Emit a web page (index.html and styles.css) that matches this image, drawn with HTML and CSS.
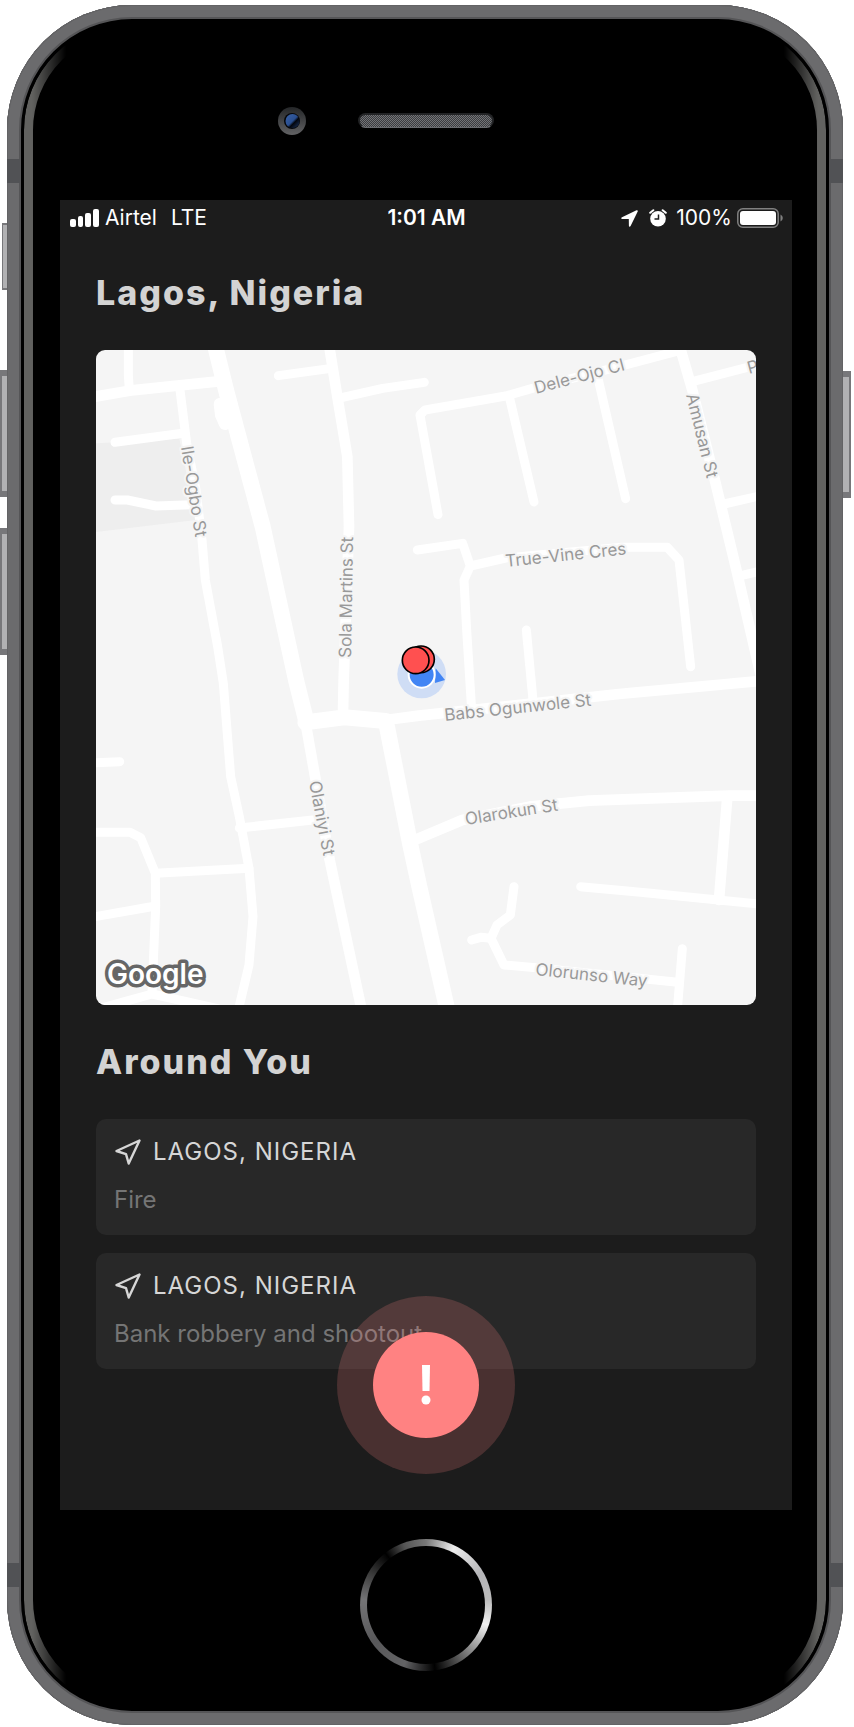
FILE: index.html
```html
<!DOCTYPE html>
<html lang="en">
<head>
<meta charset="utf-8">
<meta name="viewport" content="width=device-width, initial-scale=1">
<title>Around You</title>
<link rel="stylesheet" href="styles.css">
</head>
<body>
<div class="phone">
  <span class="side-key mute"></span>
  <span class="side-key volume-up"></span>
  <span class="side-key volume-down"></span>
  <span class="side-key power"></span>
  <span class="antenna antenna-top"></span>
  <span class="antenna antenna-bottom"></span>

  <div class="bezel-top">
    <svg class="camera" viewBox="0 0 28 28" aria-hidden="true">
      <defs>
        <linearGradient id="cam-ring" x1="0" y1="0" x2="0" y2="1"><stop offset="0" stop-color="#242628"/><stop offset="1" stop-color="#626264"/></linearGradient>
        <linearGradient id="cam-lens" x1="0" y1="0" x2="1" y2="1"><stop offset="0" stop-color="#3a62a8"/><stop offset=".5" stop-color="#2a4f90"/><stop offset=".62" stop-color="#03060d"/><stop offset="1" stop-color="#1d3768"/></linearGradient>
      </defs>
      <circle cx="14" cy="14" r="14" fill="url(#cam-ring)"/>
      <circle cx="14" cy="14" r="8" fill="#05070b"/>
      <circle cx="14.500" cy="14" r="7" fill="url(#cam-lens)"/>
    </svg>
    <div class="speaker"></div>
  </div>

  <main class="screen">
    <div class="status">
      <div class="status-left">
        <svg class="signal" viewBox="0 0 29 18" fill="#fff" aria-hidden="true">
          <rect x="0" y="10" width="6" height="8" rx="2"/><rect x="8" y="7" width="5" height="11" rx="2"/><rect x="15" y="4" width="6" height="14" rx="2"/><rect x="23" y="0" width="6" height="18" rx="2"/>
        </svg>
        <span>Airtel</span>
        <span class="network">LTE</span>
      </div>
      <div class="status-time">1:01 AM</div>
      <div class="status-right">
        <svg class="locate" viewBox="0 0 17 17" fill="#fff" aria-hidden="true"><path d="M15.500.3 1 7.200C-.2 7.800 0 8.900 1.200 8.900L7.800 9l.1 6.700c0 1.400 1.100 1.500 1.700.3L16.700 1.400C17.100.5 16.400-.1 15.500.3Z"/></svg>
        <svg class="alarm" viewBox="0 0 18 18" aria-hidden="true">
          <circle cx="9" cy="9.700" r="7.800" fill="#fff"/>
          <path d="M1.200 3.800 4.300 1.200M16.800 3.800 13.700 1.200" stroke="#fff" stroke-width="2" stroke-linecap="round"/>
          <path d="M9.500 5.500V10H5.500" fill="none" stroke="#1c1c1c" stroke-width="1.500"/>
        </svg>
        <span class="percent">100%</span>
        <svg class="battery" viewBox="0 0 46 20" aria-hidden="true">
          <rect x=".8" y=".8" width="40.400" height="18.400" rx="5" fill="none" stroke="#808080" stroke-width="1.500"/>
          <rect x="3" y="3" width="36" height="14" rx="3" fill="#fff"/>
          <path d="M43.500 6.500q2.300 1 2.300 3.500t-2.300 3.500z" fill="#808080"/>
        </svg>
      </div>
    </div>

    <div class="content">
      <h1 class="heading">Lagos, Nigeria</h1>

      <svg class="map" viewBox="0 0 660 655" role="img" aria-label="Map of Lagos">
        <g transform="scale(.33333)">
          <path d="M0 280 250 266 300 510 0 546Z" fill="#eee"/>
          <g class="road">
            <path class="w48" d="M358-10 390 120 500 530 600 990 630 1110"/>
            <path class="w36" d="M371 162 375 195 387 222"/>
            <path class="w32" d="M629 1120 659 1290 701 1530 796 1975"/>
            <path class="w48" d="M628 1117 744 1102 869 1113"/>
            <path class="w48" d="M870 1115 942 1480 970 1610 1054 1980"/>
            <path class="w32" d="M869 1110 969 1097 1569 1032 1990 993"/>
            <path class="w32" d="M699-15 724 140 754 320 759 530 743 990 741 1090"/>
            <path d="M547 77 700 56"/>
            <path d="M740 142 860 115 985 97"/>
            <path class="w32" d="M-15 142 100 122 360 95"/>
            <path d="M97-15V75L100 120"/>
            <path d="M252 120 272 280 300 420 318 570 328 690 365 890 382 1000 404 1280 430 1400 459 1555 471 1700 459 1845 427 1980"/>
            <path d="M57 277 260 250"/>
            <path d="M57 450H94L180 468 285 464"/>
            <path d="M-15 1239 71 1235"/>
            <path d="M-15 1447H102L134 1463 178 1570 179 1670 168 1930"/>
            <path d="M178 1570 459 1555"/>
            <path d="M430 1434 650 1410"/>
            <path d="M-15 1702 179 1668"/>
            <path d="M10 1976 168 1932 365 1976"/>
            <path class="w32" d="M945 1475 1099 1410 1300 1370 1479 1352 1899 1337H1990"/>
            <path class="w32" d="M1894 1340 1869 1650"/>
            <path d="M1454 1610 1649 1628 1990 1662"/>
            <path d="M1254 1610 1243 1695 1203 1725 1185 1765 1224 1845 1320 1853 1650 1887 1745 1897"/>
            <path d="M1127 1770 1154 1762 1185 1765"/>
            <path d="M1759 1796 1744 1980"/>
            <path d="M1026 494 972 195 987 180 1229 138 1309 115 1569 50 1750 2"/>
            <path d="M1241 145 1314 456"/>
            <path d="M1506 85 1589 446"/>
            <path class="w32" d="M1750-15 1789 120 1854 380 1919 650 1995 980"/>
            <path d="M1789 95 1990 43"/>
            <path d="M1884 462 1990 438"/>
            <path d="M1944 675 1990 664"/>
            <path d="M964 600 1100 580 1123 648 1104 690 1112 840 1127 1080"/>
            <path d="M1123 648 1229 624 1579 592H1714L1749 630 1784 950"/>
            <path d="M1291 840 1311 1050"/>
          </g>
        </g>
        <g class="street">
          <text transform="translate(440 44) rotate(-15)">Dele-Ojo Cl</text>
          <text transform="translate(410 217) rotate(-6)">True-Vine Cres</text>
          <text transform="translate(590 45) rotate(76)">Amusan St</text>
          <text transform="translate(653 24) rotate(-15)">P</text>
          <text transform="translate(85 97) rotate(81)">Ile-Ogbo St</text>
          <text transform="translate(255 308) rotate(-89)">Sola Martins St</text>
          <text transform="translate(349 371) rotate(-6)">Babs Ogunwole St</text>
          <text transform="translate(370 475) rotate(-9)">Olarokun St</text>
          <text transform="translate(439 625) rotate(6)">Olorunso Way</text>
          <text transform="translate(213 432) rotate(79)">Olaniyi St</text>
        </g>
        <text class="map-brand" x="11" y="634">Google</text>
        <g transform="scale(.33333)">
          <circle cx="977" cy="972" r="73" fill="#cfddf5"/>
          <path d="M1019 955 1047 990 1017 999Z" fill="#4285f4"/>
          <circle cx="977" cy="974" r="39" fill="#4285f4" stroke="#fff" stroke-width="6"/>
          <circle cx="975" cy="928" r="40" fill="#ff5050" stroke="#000" stroke-width="5"/>
          <circle cx="959" cy="931" r="40" fill="#ff5050" stroke="#000" stroke-width="5"/>
        </g>
      </svg>

      <h2 class="heading">Around You</h2>
      <div class="reports">
        <article class="report">
          <h3 class="report-place">
            <svg class="nav-icon" viewBox="0 0 26 26" aria-hidden="true"><path d="M24.500 1.500 1.500 12 11 15.200 13.700 24.500Z"/></svg>
            LAGOS, NIGERIA
          </h3>
          <p class="report-text">Fire</p>
        </article>
        <article class="report">
          <h3 class="report-place">
            <svg class="nav-icon" viewBox="0 0 26 26" aria-hidden="true"><path d="M24.500 1.500 1.500 12 11 15.200 13.700 24.500Z"/></svg>
            LAGOS, NIGERIA
          </h3>
          <p class="report-text">Bank robbery and shootout</p>
        </article>
      </div>
    </div>

    <button class="alert" type="button" aria-label="Report an incident">
      <span class="alert-core">
        <svg class="alert-mark" viewBox="0 0 10 40" fill="#fff" aria-hidden="true"><path d="M1 0H9L8.500 26H1.500Z"/><circle cx="5" cy="35" r="4.500"/></svg>
      </span>
    </button>
  </main>

  <div class="bezel-bottom">
    <button class="home" type="button" aria-label="Home"></button>
  </div>
</div>
</body>
</html>
```

FILE: styles.css
```css
* {
  box-sizing: border-box;
}

body {
  margin: 0;
  padding: 5px 11px 4px 7px;
  background: #fff;
  color: #fff;
  font-family: Inter, "Liberation Sans", sans-serif;
}

h1, h2, h3, p {
  margin: 0;
}

/* Device frame */
.phone {
  position: relative;
  padding: 14px 51px 14px 53px;
  border-radius: 125px;
  background: #000;
  box-shadow: inset 0 0 0 1px #636365, inset 0 0 0 12px #6b6b6d, inset 0 0 0 14px #555557;
}

/* Bright rim on both long edges that fades out round the corners */
.phone::before {
  content: "";
  position: absolute;
  inset: 17px;
  border: 9px solid #626260;
  border-radius: 108px;
  mask-image: linear-gradient(90deg, #000 8px, transparent 42px, transparent calc(100% - 42px), #000 calc(100% - 8px));
}

.side-key {
  position: absolute;
  left: -7px;
  width: 7px;
  height: 127px;
  border: solid #77777a;
  border-width: 6px 0 6px 2px;
  background: #b1b1b3;
}

.mute {
  left: -5px;
  top: 218px;
  width: 5px;
  height: 67px;
  border-width: 2px 0 2px 1px;
}

.volume-up {
  top: 365px;
}

.volume-down {
  top: 523px;
}

.power {
  top: 366px;
  left: auto;
  right: -8px;
  width: 8px;
  border-width: 6px 2px 6px 0;
}

.antenna {
  position: absolute;
  left: 0;
  right: 0;
  height: 24px;
  border: solid #515255;
  border-width: 0 13px;
}

.antenna-top {
  top: 154px;
}

.antenna-bottom {
  bottom: 138px;
}

.bezel-top {
  display: grid;
  grid-template-columns: 1fr auto 1fr;
  align-items: center;
  height: 181px;
  padding: 44px 0 22px;
}

.camera {
  justify-self: end;
  width: 28px;
  height: 28px;
  margin-right: 52px;
}

.speaker {
  width: 136px;
  height: 15px;
  border: 2px solid #222325;
  border-bottom: 1px solid #6b6d70;
  border-radius: 8px;
  background: repeating-conic-gradient(#737477 0 25%, #3b3c3f 0 50%) 0 0 / 2px 2px;
}

/* Screen */
.screen {
  position: relative;
  background: #1c1c1c;
}

.status {
  display: grid;
  grid-template-columns: 1fr auto 1fr;
  align-items: center;
  height: 36px;
  padding: 0 9px 0 10px;
  font-size: 21px;
  line-height: 24px;
}

.status-left,
.status-right {
  display: flex;
  align-items: center;
}

.status-left {
  gap: 6px;
}

.network {
  margin-left: 8px;
}

.status-time {
  font-weight: 600;
}

.status-right {
  justify-content: flex-end;
}

.signal {
  width: 29px;
  height: 18px;
}

.locate {
  width: 17px;
  height: 17px;
}

.alarm {
  width: 18px;
  height: 18px;
  margin: 0 9px 0 11px;
}

.battery {
  width: 46px;
  height: 20px;
  margin-left: 5px;
}

.content {
  padding: 35px 36px 141px;
}

.heading {
  color: #d3d3d3;
  font-size: 34px;
  line-height: 44px;
  font-weight: 800;
  letter-spacing: 2px;
}

.map {
  display: block;
  width: 100%;
  height: auto;
  margin: 35px 0;
  border-radius: 9px;
  background: #f5f5f5;
  overflow: hidden;
}

.road {
  fill: none;
  stroke: #fff;
  stroke-width: 27;
  stroke-linecap: round;
  stroke-linejoin: round;
}

.w32 {
  stroke-width: 32;
}

.w36 {
  stroke-width: 36;
}

.w48 {
  stroke-width: 48;
}

.street {
  fill: #999;
  stroke: #f5f5f5;
  stroke-width: 4px;
  stroke-linejoin: round;
  paint-order: stroke;
  font-size: 17px;
}

.map-brand {
  fill: #fff;
  stroke: #666;
  stroke-width: 7px;
  stroke-linejoin: round;
  paint-order: stroke;
  font-size: 28px;
  font-weight: 600;
}

.reports {
  display: grid;
  gap: 18px;
  margin-top: 35px;
}

.report {
  display: grid;
  gap: 18px;
  padding: 18px 18px 20px;
  border-radius: 10px;
  background: #282828;
}

.report-place {
  display: flex;
  align-items: center;
  gap: 12px;
  padding-left: 1px;
  color: #d6d6d6;
  font-size: 24px;
  line-height: 30px;
  font-weight: 400;
  letter-spacing: 1px;
}

.nav-icon {
  width: 26px;
  height: 26px;
  fill: none;
  stroke: #d6d6d6;
  stroke-width: 2.4;
  stroke-linejoin: round;
}

.report-text {
  color: #757575;
  font-size: 24px;
  line-height: 30px;
}

/* Floating action over the list */
.alert {
  position: absolute;
  left: 50%;
  bottom: 36px;
  display: grid;
  place-items: center;
  width: 178px;
  height: 178px;
  padding: 0;
  border: 0;
  border-radius: 50%;
  background: rgba(255, 130, 130, 0.2);
  transform: translateX(-50%);
}

.alert-core {
  display: grid;
  place-items: center;
  width: 106px;
  height: 106px;
  border-radius: 50%;
  background: #ff8282;
}

.alert-mark {
  width: 10px;
  height: 40px;
}

.bezel-bottom {
  display: grid;
  justify-items: center;
  height: 201px;
  padding-top: 29px;
}

.home {
  width: 132px;
  height: 132px;
  padding: 0;
  border: 7px solid transparent;
  border-radius: 50%;
  background:
    linear-gradient(#000, #000) padding-box,
    conic-gradient(#777 0deg, #eee 26deg, #b5b5b8 60deg, #bbb 85deg, #f2f2f2 108deg, #666 145deg, #000 172deg, #636365 200deg, #58585a 235deg, #747476 275deg, #3a3a3a 300deg, #000 322deg, #555 340deg, #777 360deg) border-box;
}
```
